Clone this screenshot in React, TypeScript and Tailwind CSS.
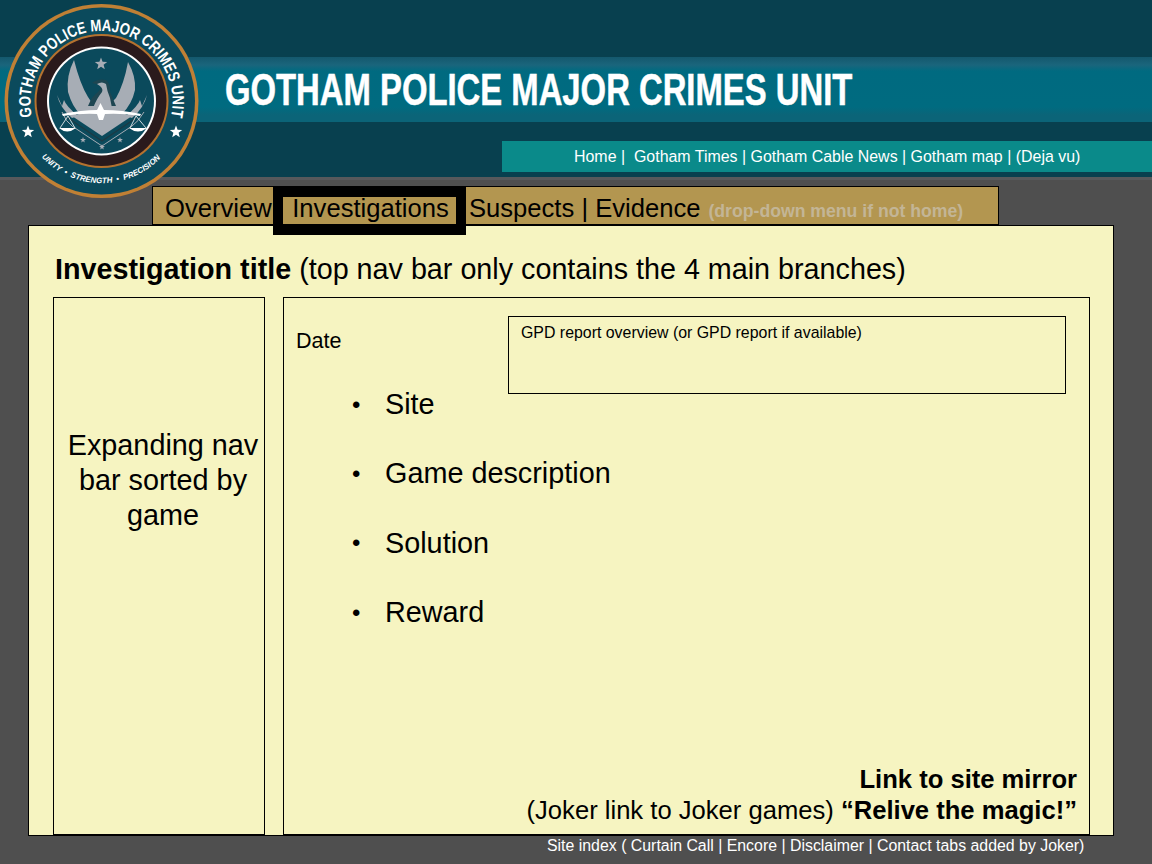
const Star = ({ x, y, r, fill = "#ffffff" }: { x: number; y: number; r: number; fill?: string }) => {
  const pts = Array.from({ length: 10 }, (_, i) => {
    const a = -Math.PI / 2 + (i * Math.PI) / 5;
    const rr = i % 2 ? r * 0.42 : r;
    return `${(x + rr * Math.cos(a)).toFixed(1)},${(y + rr * Math.sin(a)).toFixed(1)}`;
  }).join(" ");
  return <polygon points={pts} fill={fill} />;
};

function Logo() {
  const grey = "#a7adb5";
  const teal = "#0b4a5c";
  return (
    <svg viewBox="0 0 200 200" className="absolute left-0 top-0 h-[200px] w-[200px]">
      <defs>
        <path id="topArc" d="M 32 116.5 A 71 71 0 1 1 171 116.5" fill="none" />
        <path id="botArc" d="M 41.5 157 A 82 82 0 0 0 161.5 157" fill="none" />
      </defs>
      <circle cx="101.5" cy="101" r="97" fill="#c08035" />
      <circle cx="101.5" cy="101" r="93.5" fill={teal} />
      <circle cx="101.5" cy="101" r="67" fill="#b5722f" />
      <circle cx="101.5" cy="101" r="65" fill="#2a1a1c" />
      <circle cx="101.5" cy="101" r="54.5" fill="#ffffff" />
      <circle cx="101.5" cy="101" r="52.5" fill={teal} />
      {/* wings */}
      <path d="M74 60 Q66 76 68 92 Q72 106 80 114 L122 114 Q132 104 135 90 Q136 76 128 62 Q124 84 116 98 L108 106 L94 106 L88 97 Q80 84 74 60Z" fill={grey} />
      <path d="M57 95 Q60 108 72 118 L78 116 Q66 106 64 100 L62 106 Z" fill={grey} />
      <path d="M147 95 Q144 108 132 118 L126 116 Q138 106 140 100 L142 106 Z" fill={grey} />
      {/* shield */}
      <path d="M72 116 L102 136 L132 116 L118 112 L86 112 Z" fill={grey} />
      <path d="M68 118 L102 141 L136 118" fill="none" stroke="#1e3a44" strokeWidth="1.2" />
      <path d="M62 112 Q66 122 72 126 L102 146 L132 126 Q138 122 144 112" fill="none" stroke={grey} strokeWidth="1" />
      {/* body and head */}
      <path d="M92 83 Q98 78 106 80 Q111 84 110 92 L116 106 L88 106 Q92 96 98 92 Q102 88 100 85 Q96 84 92 83Z" fill="#1e4652" />
      <path d="M97 84 Q102 81 106 84 Q107 91 110 98 L112 108 L93 108 Q97 98 102 92 Q104 88 97 84Z" fill={grey} />
      <Star x={101} y={64} r={6.5} fill={grey} />
      {/* balance beam */}
      <path d="M62 114 Q82 110 97 110 L100.5 103 L104 110 Q122 110 141 114 L140 116 Q122 113 105 114 L103 120 L99 120 L97 114 Q82 113 63 116Z" fill="#ffffff" />
      <path d="M68 116 L60 128 M68 116 L75 128 M136 116 L130 128 M136 116 L146 128" stroke="#ffffff" strokeWidth="0.8" fill="none" />
      <path d="M59 128 Q67 135 76 128 Z M129 128 Q138 135 147 128 Z" fill="#ffffff" />
      <Star x={83} y={140} r={3} fill={grey} />
      <Star x={102} y={147} r={3} fill={grey} />
      <Star x={120} y={140} r={3} fill={grey} />
      <Star x={28} y={132} r={6.5} />
      <Star x={176} y={132} r={6.5} />
      <text fill="#ffffff" fontFamily="'Liberation Sans', sans-serif" fontWeight="700" fontSize="16.5">
        <textPath href="#topArc" textLength="252" lengthAdjust="spacingAndGlyphs">
          GOTHAM POLICE MAJOR CRIMES UNIT
        </textPath>
      </text>
      <text fill="#ffffff" fontFamily="'Liberation Sans', sans-serif" fontWeight="700" fontStyle="italic" fontSize="8">
        <textPath href="#botArc" textLength="133" lengthAdjust="spacingAndGlyphs" xmlSpace="preserve">
          UNITY  •  STRENGTH  •  PRECISION
        </textPath>
      </text>
    </svg>
  );
}

export default function App() {
  return (
    <div className="relative h-[864px] w-[1152px] overflow-hidden bg-[#4f4f4f] font-['Liberation_Sans',sans-serif] text-black">
      <header className="h-[180px] border-b-[3px] border-[#57595c] bg-[#08404f] pt-[57px]">
        <div className="flex h-[65px] items-center bg-[linear-gradient(#14586d_0,#1a657c_8px,#006a80_14px,#006b80_50px,#0b6478_58px,#0b6478_100%)] pl-[225px]">
          <h1 className="origin-left scale-x-[0.746] whitespace-nowrap text-[44px] font-bold leading-none text-white [-webkit-text-stroke:0.5px_white]">
            GOTHAM POLICE MAJOR CRIMES UNIT
          </h1>
        </div>
        <div className="ml-[502px] mt-[19px] flex h-[31px] items-center whitespace-pre bg-[#0a8a8a] pl-[72px] text-[15.95px] text-white">
          Home |  Gotham Times | Gotham Cable News | Gotham map | (Deja vu)
        </div>
      </header>
      <Logo />
      <nav className="relative z-10 ml-[152px] mt-[6px] flex h-[39px] w-[847px] items-center whitespace-nowrap border border-black bg-[#b39650] pl-[12px] text-[25.6px]">
        <span className="mt-[4px] w-[120px] leading-[26px]">Overview</span>
        <span className="absolute left-[120px] top-0 flex h-[48px] w-[193px] justify-center border-[10px] border-black bg-[#b39650] pl-[2px] text-[25.6px] leading-[23px] [border-bottom-width:11px]">
          Investigations
        </span>
        <span className="ml-[184px] mt-[4px] leading-[26px]">Suspects | Evidence</span>
        <span className="ml-[8px] mt-[10px] text-[17.65px] font-bold leading-[22px] text-[#c3b596]">(drop-down menu if not home)</span>
      </nav>
      <main className="ml-[28px] h-[611px] w-[1086px] border border-black bg-[#f6f4c1] pl-[24px] pr-[23px]">
        <h2 className="flex h-[71px] items-center whitespace-nowrap pl-[2px] pt-[16px] text-[28.72px]">
          <b>Investigation title</b>&nbsp;(top nav bar only contains the 4 main branches)
        </h2>
        <div className="flex h-[538px] gap-[18px]">
          <aside className="w-[212px] border border-black pl-[8px] pt-[130px] text-center text-[28.8px] leading-[35px]">
            <span>Expanding nav bar sorted by game</span>
          </aside>
          <section className="relative flex-1 border border-black">
            <div className="flex items-start pt-[18px]">
              <div className="w-[224px] pl-[12px] pt-[9px] text-[21.5px]">Date</div>
              <div className="h-[78px] w-[558px] border border-black pl-[12px] pt-[4px] text-[15.9px]">
                GPD report overview (or GPD report if available)
              </div>
            </div>
            <ul className="ml-[68px] mt-[-24px] text-[28.8px]">
              {["Site", "Game description", "Solution", "Reward"].map((t) => (
                <li key={t} className="flex h-[69.3px] items-center">
                  <span className="w-[33px] text-[24px]">•</span>
                  {t}
                </li>
              ))}
            </ul>
            <div className="absolute bottom-[8px] right-[12px] text-right text-[25.6px] leading-[31px]">
              <div className="font-bold">Link to site mirror</div>
              <div>
                (Joker link to Joker games) <b>“Relive the magic!”</b>
              </div>
            </div>
          </section>
        </div>
      </main>
      <footer className="ml-[547px] mt-[1px] whitespace-nowrap text-[15.88px] leading-[18px] text-white">
        Site index ( Curtain Call | Encore | Disclaimer | Contact tabs added by Joker)
      </footer>
    </div>
  );
}
